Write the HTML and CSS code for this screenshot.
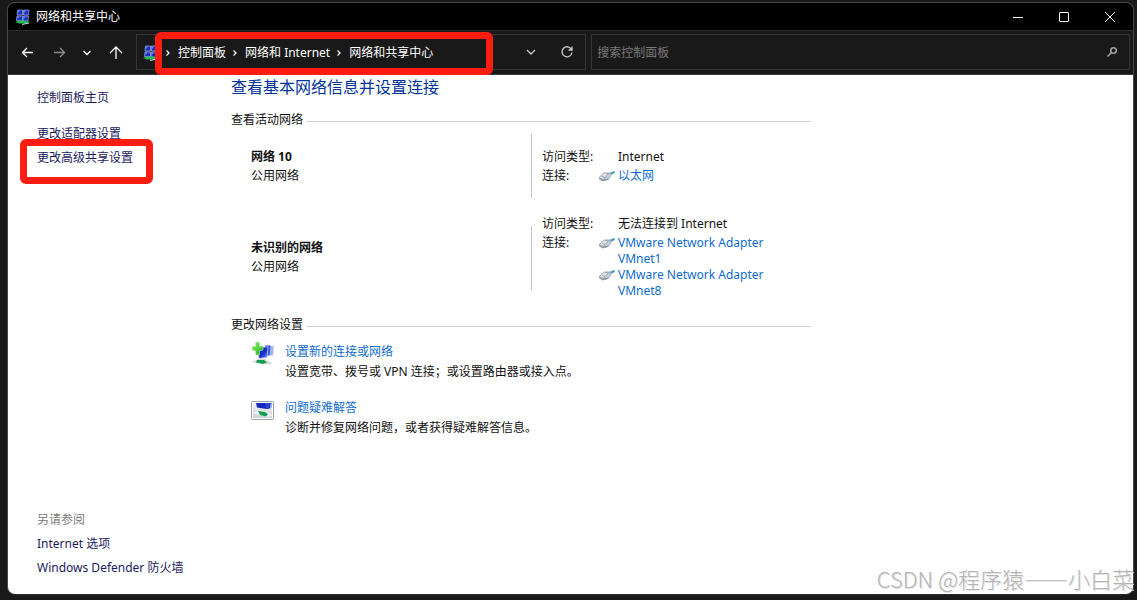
FILE: index.html
```html
<!DOCTYPE html>
<html lang="zh-CN">
<head>
<meta charset="utf-8">
<meta name="viewport" content="width=device-width, initial-scale=1">
<title>网络和共享中心</title>
<link rel="stylesheet" href="styles.css">
</head>
<body>
<svg class="defs" aria-hidden="true">
  <defs>
    <linearGradient id="screen" x1="0" y1="0" x2="1" y2="1">
      <stop offset="0" stop-color="#0a1a9c"/><stop offset=".6" stop-color="#1c34cc"/><stop offset="1" stop-color="#7f9cf5"/>
    </linearGradient>
    <linearGradient id="plus" x1="0" y1="0" x2="1" y2="1">
      <stop offset="0" stop-color="#8df06a"/><stop offset="1" stop-color="#1fae1c"/>
    </linearGradient>
    <linearGradient id="panel" x1="0" y1="0" x2="0" y2="1">
      <stop offset="0" stop-color="#f4f6f8"/><stop offset="1" stop-color="#c9ced4"/>
    </linearGradient>
    <symbol id="center" viewBox="0 0 16 16">
      <path d="M2.500 1h5v5H2zM8.500 1h5.500l-.5 5h-5zM2 7h5.500v4.500h-6zM8.500 7h5l-.5 5H8z" fill="#1a30c4" stroke="#9fb2e6" stroke-width=".7"/>
      <path d="M3 1.500h2L3 4zM9 1.500h2L9 4zM2.500 7.500h2l-2 2.500zM9 7.500h2L8.500 10z" fill="#6f8cff"/>
      <path d="M0 13l5-1.500h5l5 1.500-4 1.500H4z" fill="#1fbd58"/>
      <path d="M7 15.500l7-1.500" stroke="#cfd8e2"/>
    </symbol>
    <symbol id="plug" viewBox="0 0 16 11">
      <path d="M0 6l5-4.500h6L15.500 0 16 2l-3 1.500L9.500 9 4 10.500 0 8.500z" fill="#a4adb7"/>
      <path d="M.8 6.500L5 2.500l3.500.7L4.500 8z" fill="#e1e5e9"/>
      <path d="M5.500 8l4.500-5 2.500.3L9 8z" fill="#c6ced7"/>
      <path d="M1 8l3 1.500L9 8M3 5.500l3 1" stroke="#7f8a96" stroke-width=".8" fill="none"/>
      <path d="M11.500 2.500l4-1.500" stroke="#3aa3c8" stroke-width="1.500"/>
    </symbol>
  </defs>
</svg>

<div class="window">
  <header class="titlebar">
    <svg class="icon16"><use href="#center"/></svg>
    <span class="title">网络和共享中心</span>
    <button class="caption" aria-label="最小化"><svg viewBox="0 0 12 12"><path d="M1 6.500h10"/></svg></button>
    <button class="caption" aria-label="最大化"><svg viewBox="0 0 12 12"><rect x="1.500" y="1.500" width="9" height="9" rx=".5"/></svg></button>
    <button class="caption" aria-label="关闭"><svg viewBox="0 0 12 12"><path d="M1 1l10 10M11 1L1 11"/></svg></button>
  </header>

  <div class="toolbar">
    <div class="history">
      <button aria-label="后退"><svg viewBox="0 0 16 16"><path d="M13 8.500H2.500M7 4L2.500 8.500 7 13"/></svg></button>
      <button class="dim" aria-label="前进"><svg viewBox="0 0 16 16"><path d="M2 8.500h10.500M8 4l4.500 4.500L8 13"/></svg></button>
      <button class="narrow" aria-label="最近浏览的位置"><svg viewBox="0 0 16 16"><path d="M3.500 7L7 10.500 10.500 7"/></svg></button>
      <button aria-label="上移"><svg viewBox="0 0 16 16"><path d="M8 15V3M2 9l6-6 6 6"/></svg></button>
    </div>
    <div class="address">
      <nav class="crumbs" aria-label="地址">
        <svg class="icon16"><use href="#center"/></svg>
        <svg class="sep" viewBox="0 0 9 12"><path d="M2.500 3.500L5 6 2.500 8.500"/></svg>
        <a href="#">控制面板</a>
        <svg class="sep" viewBox="0 0 9 12"><path d="M2.500 3.500L5 6 2.500 8.500"/></svg>
        <a href="#">网络和 Internet</a>
        <svg class="sep" viewBox="0 0 9 12"><path d="M2.500 3.500L5 6 2.500 8.500"/></svg>
        <a href="#">网络和共享中心</a>
        <span class="mark mark-address" aria-hidden="true"></span>
      </nav>
      <button aria-label="以前的位置"><svg viewBox="0 0 16 16"><path d="M4 6l4 4 4-4"/></svg></button>
      <button aria-label="刷新"><svg viewBox="0 0 16 16"><path d="M12.500 5.500A5 5 0 1 0 13 8.500M13 2.500v3.500H9.500"/></svg></button>
    </div>
    <label class="search">
      <input type="search" placeholder="搜索控制面板" aria-label="搜索控制面板">
      <svg viewBox="0 0 12 12"><circle cx="7.500" cy="4.500" r="2.800"/><path d="M5.500 6.500L1.500 10.500"/></svg>
    </label>
  </div>

  <div class="content">
    <aside class="sidebar">
      <a href="#" class="home">控制面板主页</a>
      <a href="#">更改适配器设置</a>
      <a href="#" class="marked">更改高级共享设置<span class="mark mark-link" aria-hidden="true"></span></a>
      <div class="seealso">
        <span>另请参阅</span>
        <a href="#">Internet 选项</a>
        <a href="#">Windows Defender 防火墙</a>
      </div>
    </aside>

    <main class="main">
      <h1>查看基本网络信息并设置连接</h1>

      <section>
        <h2>查看活动网络</h2>
        <div class="networks">
          <div class="network">
            <div class="name"><strong>网络 10</strong><span>公用网络</span></div>
            <div class="divider"></div>
            <dl>
              <dt>访问类型:</dt><dd>Internet</dd>
              <dt>连接:</dt>
              <dd><a href="#"><svg><use href="#plug"/></svg>以太网</a></dd>
            </dl>
          </div>
          <div class="network">
            <div class="name"><strong>未识别的网络</strong><span>公用网络</span></div>
            <div class="divider"></div>
            <dl>
              <dt>访问类型:</dt><dd>无法连接到 Internet</dd>
              <dt>连接:</dt>
              <dd>
                <a href="#"><svg><use href="#plug"/></svg>VMware Network Adapter VMnet1</a>
                <a href="#"><svg><use href="#plug"/></svg>VMware Network Adapter VMnet8</a>
              </dd>
            </dl>
          </div>
        </div>
      </section>

      <section>
        <h2>更改网络设置</h2>
        <div class="tasks">
          <div class="task">
            <svg viewBox="0 0 24 24">
              <path d="M14.500 4H23l-1 9.500-7 1z" fill="#9fb5f2" stroke="#dbe4f6" stroke-width=".8"/>
              <path d="M14 3.500h5.500l-1 9.500-4 1z" fill="#2f55e5"/>
              <path d="M6 5h11l-1 10.500-8 1z" fill="url(#screen)" stroke="#c3cfee" stroke-width=".8"/>
              <path d="M0 19.500l8-2.500h6l7 4-2 2-8-1.500-7-.5z" fill="#d9dfe2"/>
              <path d="M6 18h7l3 2.500-4 1.500-7-1.500z" fill="#149c50"/>
              <path d="M4.500 0h4v4.500L12 4v4l-3.500 1v4h-4V9L1 8V4.500h3.500z" fill="url(#plus)" stroke="#c8f5b8" stroke-width=".5"/>
            </svg>
            <div><a href="#">设置新的连接或网络</a><p>设置宽带、拨号或 VPN 连接；或设置路由器或接入点。</p></div>
          </div>
          <div class="task">
            <svg viewBox="0 0 24 24">
              <rect x=".5" y="3.500" width="22" height="18" rx="1" fill="url(#panel)" stroke="#9aa0a6"/>
              <rect x="1.500" y="4.500" width="20" height="16" fill="none" stroke="#fff"/>
              <path d="M5 5h16l-1 5-4 1-4-.5-6-1z" fill="#1526b8"/>
              <path d="M14 5h5l-1 5.500-3 .3z" fill="#2748d8"/>
              <path d="M19.500 5.500h2l-1 4-1.500 1z" fill="#a9bdf2"/>
              <path d="M1.500 15l7-2.500 7 1 6 4-4 1.500-7-1.500z" fill="#f3f6f8"/>
              <path d="M7 13l7 1 3 2-2 2.500-6-1.500z" fill="#149c50"/>
            </svg>
            <div><a href="#">问题疑难解答</a><p>诊断并修复网络问题，或者获得疑难解答信息。</p></div>
          </div>
        </div>
      </section>
    </main>
  </div>
</div>
<div class="watermark">CSDN @程序猿——小白菜</div>
</body>
</html>
```
FILE: styles.css
```css
* { box-sizing: border-box; margin: 0; padding: 0; }

body {
  display: flex;
  min-height: 100vh;
  padding: 2px 3px 5px 7px;
  overflow-x: hidden;
  background: #191919;
  color: #111;
  font: 12px/16px "Noto Sans", "Noto Sans CJK SC", sans-serif;
  position: relative;
}

a { color: #0f6cd0; text-decoration: none; }
button { border: 0; background: none; color: inherit; }
.defs { position: absolute; width: 0; height: 0; }
.icon16 { width: 16px; height: 16px; flex: none; }

.window {
  flex: 1;
  display: flex;
  flex-direction: column;
  min-width: 0;
  border: 1px solid #484848;
  border-bottom-color: #2a2a2a;
  border-radius: 8px;
  background: #191919;
}

.titlebar {
  display: flex;
  align-items: center;
  height: 28px;
  padding-left: 7px;
  border-bottom: 1px solid #2b2b2b;
  border-radius: 7px 7px 0 0;
  background: #000;
  color: #fff;
}
.title { flex: 1; padding-left: 5px; }
.caption { display: grid; place-items: center; width: 46px; height: 27px; }
.caption svg { width: 12px; height: 12px; fill: none; stroke: #fff; }

.toolbar {
  display: flex;
  height: 44px;
  padding: 3px 3px 4px 4px;
  border-bottom: 1px solid #3a3a3a;
  color: #fff;
}
.toolbar button { display: grid; place-items: center; width: 32px; }
.toolbar button svg { width: 16px; height: 16px; fill: none; stroke: currentColor; stroke-width: 1.3; }
.toolbar .dim { color: #8c8c8c; }
.toolbar .narrow { width: 24px; }
.history { display: flex; width: 124px; flex: none; }
.address, .search { display: flex; border: 1px solid #353535; min-width: 0; }
.address { flex: 450 1 0; margin-right: 5px; }
.address button { width: 36px; color: #ccc; }
.crumbs { position: relative; flex: 1; display: flex; align-items: center; padding: 1px 0 0 6px; white-space: nowrap; }
.crumbs a { color: #fff; }
.crumbs .sep { width: 9px; height: 12px; margin: 0 5px; fill: none; stroke: #fff; stroke-width: 1.3; }
.search { flex: 539 1 0; align-items: center; }
.search input { flex: 1; min-width: 0; padding: 1px 0 0 5px; border: 0; outline: 0; background: none; color: #fff; font: inherit; }
.search input::placeholder { color: #7a7a7a; opacity: 1; }
.search svg { width: 12px; height: 12px; margin-right: 11px; fill: none; stroke: #a0a0a0; stroke-width: 1.6; }

.mark { position: absolute; z-index: 2; border: 7px solid #ff1d12; border-radius: 6px; pointer-events: none; }
.mark-address { inset: -3px 20px -6px 18px; }
.mark-link { inset: -11px -20px -18px -17px; }

.content {
  flex: 1;
  display: flex;
  border-radius: 0 0 7px 7px;
  background: #fff;
}
.sidebar { display: flex; flex-direction: column; gap: 8px; width: 223px; padding: 15px 0 18px 29px; flex: none; }
.sidebar a { align-self: flex-start; color: #1b1b5e; }
.sidebar .home { margin-bottom: 12px; }
.sidebar .marked { position: relative; }
.seealso { display: flex; flex-direction: column; gap: 8px; margin-top: auto; color: #7b7b7b; }

.main { flex: 0 1 580px; min-width: 0; }
h1 { margin-bottom: 1px; color: #003399; font-size: 16px; line-height: 24px; font-weight: 400; }
h2 { display: flex; align-items: center; gap: 4px; font-size: 12px; font-weight: 400; }
h2::after { content: ""; flex: 1; height: 1px; margin-top: 2px; background: #d0d0d0; }
section { padding-top: 12px; }

.networks { display: flex; flex-direction: column; gap: 18px; padding: 6px 0 6px 20px; }
.network { display: flex; align-items: center; }
.name { display: flex; flex-direction: column; gap: 3px; width: 280px; }
.divider { width: 1px; height: 64px; background: #c8c8c8; }
dl { display: grid; grid-template-columns: 76px 156px; row-gap: 3px; padding-left: 10px; }
dd a { display: block; position: relative; }
dd svg { position: absolute; left: -19px; top: 3px; width: 16px; height: 11px; }

.tasks { display: flex; flex-direction: column; gap: 16px; padding: 9px 0 0 20px; }
.task { display: flex; gap: 10px; line-height: 20px; }
.task svg { width: 24px; height: 24px; flex: none; }

.watermark {
  position: absolute;
  right: 3px;
  bottom: 6px;
  color: #b4b4b4;
  font: 300 22px/32px "Noto Sans CJK SC", sans-serif;
  text-shadow: 1px 1px 0 #e4e4e4;
  white-space: nowrap;
  pointer-events: none;
}
```
